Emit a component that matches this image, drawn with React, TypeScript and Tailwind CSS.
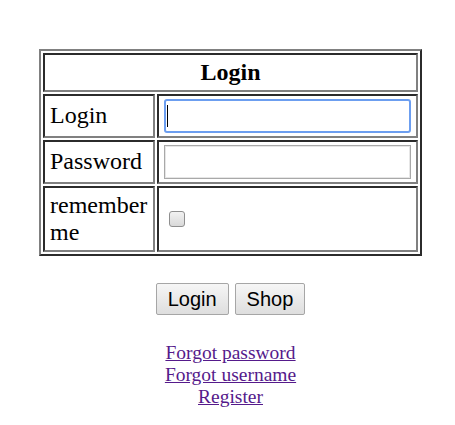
import React from "react";

const serif = { fontFamily: '"Liberation Serif", "Times New Roman", serif' };

export default function App() {
  return (
    <div className="min-h-[425px] w-[455px] bg-white pt-[49px] pl-[39px]" style={serif}>
      <div className="w-[383px]">
        {/* Login table */}
        <table className="w-[383px] border-separate border-spacing-[2px] border-2 border-t-[#808080] border-l-[#808080] border-r-[#2b2b2b] border-b-[#2b2b2b] text-[24px] leading-[27.6px] text-black">
          <tbody>
            <tr>
              <th colSpan={2} className="h-[39px] border-2 border-t-[#2b2b2b] border-l-[#2b2b2b] border-r-[#808080] border-b-[#808080] px-[5px] py-[3px] text-center font-bold">
                Login
              </th>
            </tr>
            <tr>
              <td className="w-[112px] border-2 border-t-[#2b2b2b] border-l-[#2b2b2b] border-r-[#808080] border-b-[#808080] px-[5px] py-[3px] text-left">
                Login
              </td>
              <td className="border-2 border-t-[#2b2b2b] border-l-[#2b2b2b] border-r-[#808080] border-b-[#808080] px-[5px] py-[3px]">
                <div className="relative">
                  <input
                    type="text"
                    className="block h-[34px] w-full rounded-[3px] border-2 border-[#6c9ef0] bg-white outline-none"
                  />
                  <span className="absolute left-[3px] top-[6px] h-[22px] w-px bg-black" />
                </div>
              </td>
            </tr>
            <tr>
              <td className="border-2 border-t-[#2b2b2b] border-l-[#2b2b2b] border-r-[#808080] border-b-[#808080] px-[5px] py-[3px] text-left">
                Password
              </td>
              <td className="border-2 border-t-[#2b2b2b] border-l-[#2b2b2b] border-r-[#808080] border-b-[#808080] px-[5px] py-[3px]">
                <input
                  type="password"
                  className="block h-[34px] w-full border border-[#a9a9a9] bg-white shadow-[inset_0_0_0_1px_#e6e6e6] outline-none"
                />
              </td>
            </tr>
            <tr>
              <td className="border-2 border-t-[#2b2b2b] border-l-[#2b2b2b] border-r-[#808080] border-b-[#808080] px-[5px] py-[3.5px] text-left">
                remember me
              </td>
              <td className="border-2 border-t-[#2b2b2b] border-l-[#2b2b2b] border-r-[#808080] border-b-[#808080] px-[5px] py-[3.5px] align-middle">
                <input
                  type="checkbox"
                  className="ml-[5px] block h-[16px] w-[16px] appearance-none rounded-[3px] border border-[#8f8f8f] bg-gradient-to-b from-[#f2f2f2] to-[#d9d9d9]"
                />
              </td>
            </tr>
          </tbody>
        </table>

        {/* Buttons */}
        <div className="mt-[27px] flex justify-center gap-[6px]" style={{ fontFamily: '"Liberation Sans", Arial, sans-serif' }}>
          <button className="h-[32px] rounded-[2px] border border-[#a6a6a6] bg-gradient-to-b from-[#f6f6f6] to-[#dedede] px-[11px] text-[20px] leading-[23px] text-black">
            Login
          </button>
          <button className="h-[32px] rounded-[2px] border border-[#a6a6a6] bg-gradient-to-b from-[#f6f6f6] to-[#dedede] px-[11px] text-[20px] leading-[23px] text-black">
            Shop
          </button>
        </div>

        {/* Links */}
        <div className="mt-[27px] flex flex-col items-center text-[19.5px] leading-[22px]">
          <a href="#" className="text-[#551a8b] underline">Forgot password</a>
          <a href="#" className="text-[#551a8b] underline">Forgot username</a>
          <a href="#" className="text-[#551a8b] underline">Register</a>
        </div>
      </div>
    </div>
  );
}
